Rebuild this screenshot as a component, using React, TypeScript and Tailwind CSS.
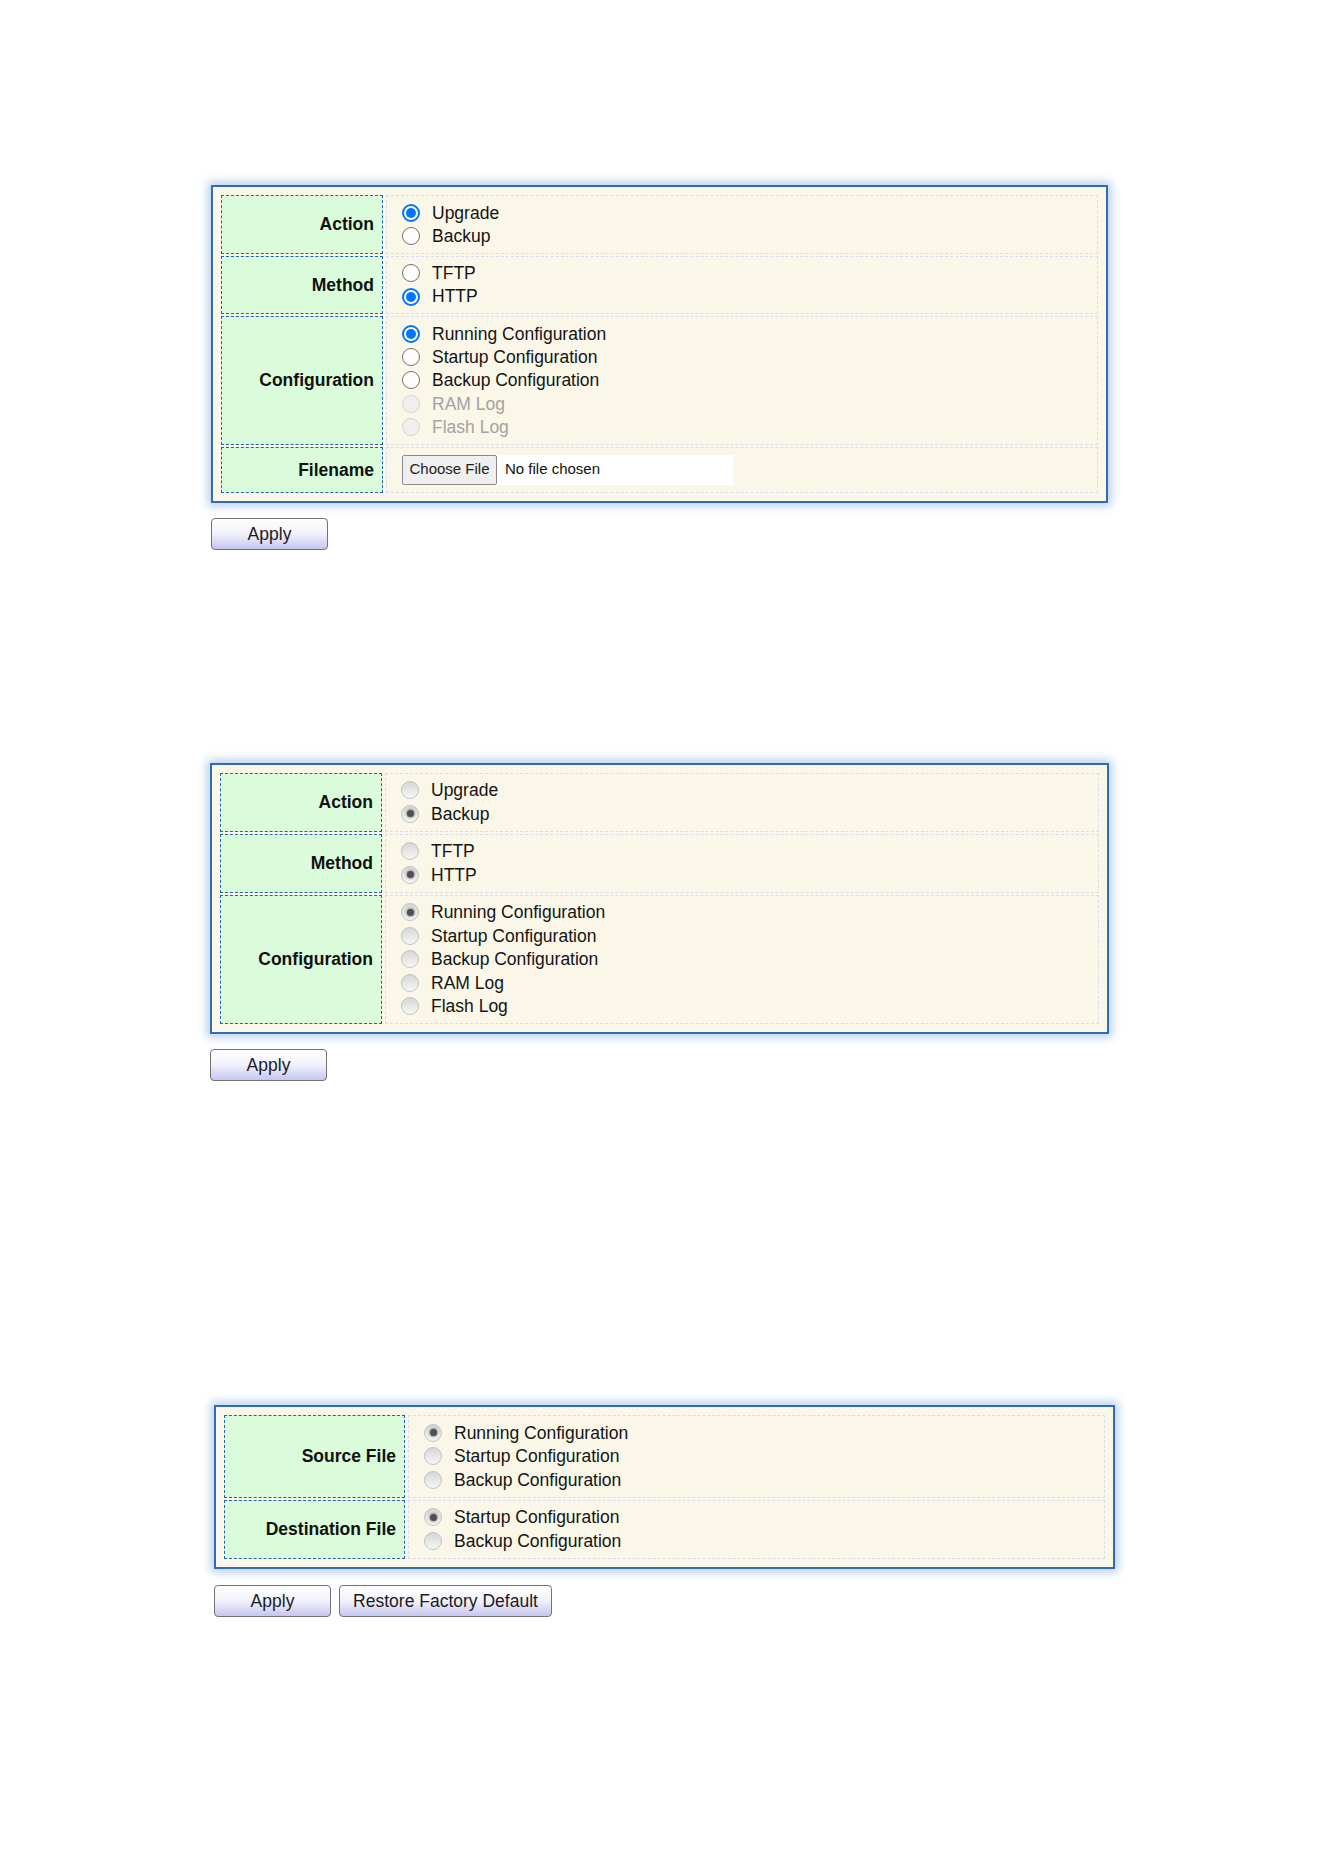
import React from "react";

type Opt = { label: string; checked?: boolean; disabled?: boolean };
type Row = { label: string; options?: Opt[]; file?: boolean };
type Look = "chrome" | "grey";

function Radio({ opt, look }: { opt: Opt; look: Look }) {
  if (look === "grey") {
    return (
      <span className="flex h-[18px] w-[18px] shrink-0 items-center justify-center rounded-full border border-[#c2c2c2] bg-gradient-to-b from-[#d6d6d6] to-[#f7f7f7]">
        {opt.checked && <span className="h-[7px] w-[7px] rounded-full bg-[#505050] shadow-[0_0_2px_1px_rgba(90,90,90,0.5)]" />}
      </span>
    );
  }
  if (opt.disabled) {
    return <span className="h-[18px] w-[18px] shrink-0 rounded-full border border-[#d4d4d4] bg-[#efefef]" />;
  }
  if (opt.checked) {
    return (
      <span className="flex h-[18px] w-[18px] shrink-0 items-center justify-center rounded-full border-2 border-[#0075ff] bg-white">
        <span className="h-[10px] w-[10px] rounded-full bg-[#0075ff]" />
      </span>
    );
  }
  return <span className="h-[18px] w-[18px] shrink-0 rounded-full border-[1.5px] border-[#707070] bg-white" />;
}

function FileInput() {
  return (
    <div className="flex h-[30px] w-[331px] items-center bg-white">
      <span className="flex h-[30px] w-[95px] items-center justify-center rounded-[2px] border border-[#8a8a8a] bg-[#efefef] text-[15px] text-[#222]">
        Choose File
      </span>
      <span className="pl-[8px] text-[15px] text-[#111]">No file chosen</span>
    </div>
  );
}

function Panel({ rows, look, cols, width, line }: { rows: Row[]; look: Look; cols: string; width: string; line: string }) {
  return (
    <div className={`${width} border-2 border-[#2f6cb3] bg-[#faf7e8] px-[8px] py-[8px] shadow-[0_0_9px_3px_rgba(90,145,215,0.45)]`}>
      <div className={`grid ${cols} gap-x-[3px] gap-y-[2px]`}>
        {rows.map((r) => (
          <React.Fragment key={r.label}>
            <div className="flex items-center justify-end border-[1.5px] border-dashed border-[#1f62b3] bg-[#dafcda] pr-[8px] text-[17.5px] font-bold text-[#111]">
              {r.label}
            </div>
            <div className={`flex flex-col justify-center border border-dashed border-[#d9dcf3] pl-[15px] ${r.file ? "py-[7px]" : "py-[5px]"}`}>
              {r.file ? (
                <FileInput />
              ) : (
                r.options!.map((o) => (
                  <div key={o.label} className={`flex ${line} items-center gap-[12px]`}>
                    <Radio opt={o} look={look} />
                    <span className={`text-[17.5px] ${o.disabled ? "text-[#a3a3a3]" : "text-[#141414]"}`}>{o.label}</span>
                  </div>
                ))
              )}
            </div>
          </React.Fragment>
        ))}
      </div>
    </div>
  );
}

function Btn({ children, w }: { children: React.ReactNode; w: string }) {
  return (
    <button className={`${w} h-[32px] rounded-[4px] border border-[#737373] bg-gradient-to-b from-white via-[#f1f1fb] to-[#c6c6f0] text-[17.5px] text-[#1c1c1c]`}>
      {children}
    </button>
  );
}

const upgradeRows: Row[] = [
  { label: "Action", options: [{ label: "Upgrade", checked: true }, { label: "Backup" }] },
  { label: "Method", options: [{ label: "TFTP" }, { label: "HTTP", checked: true }] },
  {
    label: "Configuration",
    options: [
      { label: "Running Configuration", checked: true },
      { label: "Startup Configuration" },
      { label: "Backup Configuration" },
      { label: "RAM Log", disabled: true },
      { label: "Flash Log", disabled: true },
    ],
  },
  { label: "Filename", file: true },
];

const backupRows: Row[] = [
  { label: "Action", options: [{ label: "Upgrade" }, { label: "Backup", checked: true }] },
  { label: "Method", options: [{ label: "TFTP" }, { label: "HTTP", checked: true }] },
  {
    label: "Configuration",
    options: [
      { label: "Running Configuration", checked: true },
      { label: "Startup Configuration" },
      { label: "Backup Configuration" },
      { label: "RAM Log" },
      { label: "Flash Log" },
    ],
  },
];

const copyRows: Row[] = [
  {
    label: "Source File",
    options: [
      { label: "Running Configuration", checked: true },
      { label: "Startup Configuration" },
      { label: "Backup Configuration" },
    ],
  },
  {
    label: "Destination File",
    options: [{ label: "Startup Configuration", checked: true }, { label: "Backup Configuration" }],
  },
];

export default function App() {
  return (
    <div className="min-h-[1872px] w-[1324px] bg-white font-['Liberation_Sans',Arial,sans-serif]">
      {/* Upgrade / backup via HTTP */}
      <section className="ml-[211px] pt-[185px]">
        <Panel rows={upgradeRows} look="chrome" cols="grid-cols-[162px_1fr]" width="w-[897px]" line="h-[23.3px]" />
        <div className="mt-[15px]">
          <Btn w="w-[117px]">Apply</Btn>
        </div>
      </section>

      {/* Backup selected */}
      <section className="ml-[210px] mt-[213px]">
        <Panel rows={backupRows} look="grey" cols="grid-cols-[162px_1fr]" width="w-[899px]" line="h-[23.5px]" />
        <div className="mt-[15px]">
          <Btn w="w-[117px]">Apply</Btn>
        </div>
      </section>

      {/* Copy configuration */}
      <section className="ml-[214px] mt-[324px]">
        <Panel rows={copyRows} look="grey" cols="grid-cols-[181px_1fr]" width="w-[901px]" line="h-[23.5px]" />
        <div className="mt-[16px] flex gap-[8px]">
          <Btn w="w-[117px]">Apply</Btn>
          <Btn w="w-[213px]">Restore Factory Default</Btn>
        </div>
      </section>
    </div>
  );
}
